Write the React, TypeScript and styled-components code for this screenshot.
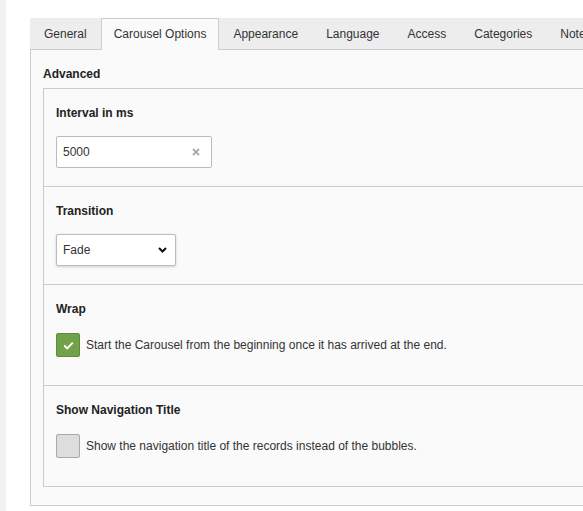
import styled, { createGlobalStyle } from "styled-components";

const GlobalStyle = createGlobalStyle`
  html, body {
    margin: 0;
    padding: 0;
    background: #fff;
    overflow: hidden;
  }
  body {
    font-family: "Liberation Sans", Arial, sans-serif;
    font-size: 12px;
    color: #333;
  }
`;

const Page = styled.div`
  display: flex;
  min-height: 511px;
`;

const Gutter = styled.div`
  width: 6px;
  flex-shrink: 0;
  background: #f2f2f2;
`;

const Main = styled.div`
  padding: 18px 0 0 24px;
  width: 720px;
  flex-shrink: 0;
`;

const TabBar = styled.div`
  display: flex;
  height: 31px;
  background: #ededed;
  border-bottom: 1px solid #ccc;
`;

const Tab = styled.div<{ $active?: boolean }>`
  display: flex;
  align-items: center;
  padding: 0 ${(p) => (p.$active ? "12px" : "13px")};
  border: 1px solid ${(p) => (p.$active ? "#ccc" : "transparent")};
  border-bottom: none;
  background: ${(p) => (p.$active ? "#fafafa" : "transparent")};
  color: #333;
  white-space: nowrap;
  box-sizing: border-box;
  margin-bottom: ${(p) => (p.$active ? "-1px" : "0")};
  height: ${(p) => (p.$active ? "32px" : "31px")};
  padding-bottom: ${(p) => (p.$active ? "1px" : "0")};
`;

const Panel = styled.div`
  background: #fafafa;
  border-left: 1px solid #ccc;
  border-bottom: 1px solid #ccc;
  padding: 15px 0 18px 12px;
`;

const Legend = styled.div`
  font-weight: bold;
  line-height: 18px;
  margin-bottom: 5px;
  color: #222;
`;

const Fieldset = styled.div`
  border: 1px solid #ccc;
  border-right: none;
  background: #fafafa;
`;

const Row = styled.div`
  padding: 16px 12px 18px;
  & + & {
    border-top: 1px solid #ccc;
  }
`;

const Label = styled.div`
  font-weight: bold;
  line-height: 16px;
  margin-bottom: 15px;
  color: #222;
`;

const InputBox = styled.div`
  display: flex;
  align-items: center;
  justify-content: space-between;
  box-sizing: border-box;
  width: 156px;
  height: 32px;
  padding: 0 11px 0 6px;
  background: #fff;
  border: 1px solid #bbb;
  border-radius: 2px;
`;

const ClearIcon = styled.svg`
  width: 8px;
  height: 8px;
  stroke: #aaa;
  stroke-width: 1.8;
`;

const Select = styled.div`
  display: flex;
  align-items: center;
  justify-content: space-between;
  box-sizing: border-box;
  width: 120px;
  height: 32px;
  padding: 0 8px 0 6px;
  background: #fff;
  border: 1px solid #bbb;
  border-radius: 2px;
  box-shadow: 0 1px 3px rgba(0, 0, 0, 0.18);
`;

const Chevron = styled.svg`
  width: 9px;
  height: 6px;
  fill: none;
  stroke: #111;
  stroke-width: 2;
`;

const CheckLine = styled.div`
  display: flex;
  align-items: flex-start;
  gap: 6px;
  min-height: 35px;
  padding-top: 1px;
  box-sizing: border-box;
`;

const Box = styled.div<{ $checked?: boolean }>`
  display: flex;
  align-items: center;
  justify-content: center;
  width: 24px;
  height: 24px;
  box-sizing: border-box;
  border-radius: 2px;
  border: 1px solid ${(p) => (p.$checked ? "#5f8c3a" : "#aaa")};
  background: ${(p) => (p.$checked ? "#71a24a" : "#ddd")};
  flex-shrink: 0;
`;

const CheckText = styled.span`
  line-height: 24px;
  color: #333;
`;

const tabs = [
  "General",
  "Carousel Options",
  "Appearance",
  "Language",
  "Access",
  "Categories",
  "Notes",
];

const Check = ({ checked, text }: { checked?: boolean; text: string }) => (
  <CheckLine>
    <Box $checked={checked}>
      {checked && (
        <svg width="11" height="9" viewBox="0 0 11 9">
          <path
            d="M1.2 4.6 L4.2 7.4 L9.8 1.6"
            fill="none"
            stroke="#fff"
            strokeWidth="2"
          />
        </svg>
      )}
    </Box>
    <CheckText>{text}</CheckText>
  </CheckLine>
);

export default function App() {
  return (
    <Page>
      <GlobalStyle />
      <Gutter />
      <Main>
        <TabBar>
          {tabs.map((t) => (
            <Tab key={t} $active={t === "Carousel Options"}>
              {t}
            </Tab>
          ))}
        </TabBar>
        <Panel>
          <Legend>Advanced</Legend>
          <Fieldset>
            <Row>
              <Label>Interval in ms</Label>
              <InputBox>
                <span>5000</span>
                <ClearIcon viewBox="0 0 8 8">
                  <path d="M1 1 L7 7 M7 1 L1 7" />
                </ClearIcon>
              </InputBox>
            </Row>
            <Row>
              <Label>Transition</Label>
              <Select>
                <span>Fade</span>
                <Chevron viewBox="0 0 9 6">
                  <path d="M1 1 L4.5 4.5 L8 1" />
                </Chevron>
              </Select>
            </Row>
            <Row>
              <Label>Wrap</Label>
              <Check
                checked
                text="Start the Carousel from the beginning once it has arrived at the end."
              />
            </Row>
            <Row>
              <Label>Show Navigation Title</Label>
              <Check text="Show the navigation title of the records instead of the bubbles." />
            </Row>
          </Fieldset>
        </Panel>
      </Main>
    </Page>
  );
}
